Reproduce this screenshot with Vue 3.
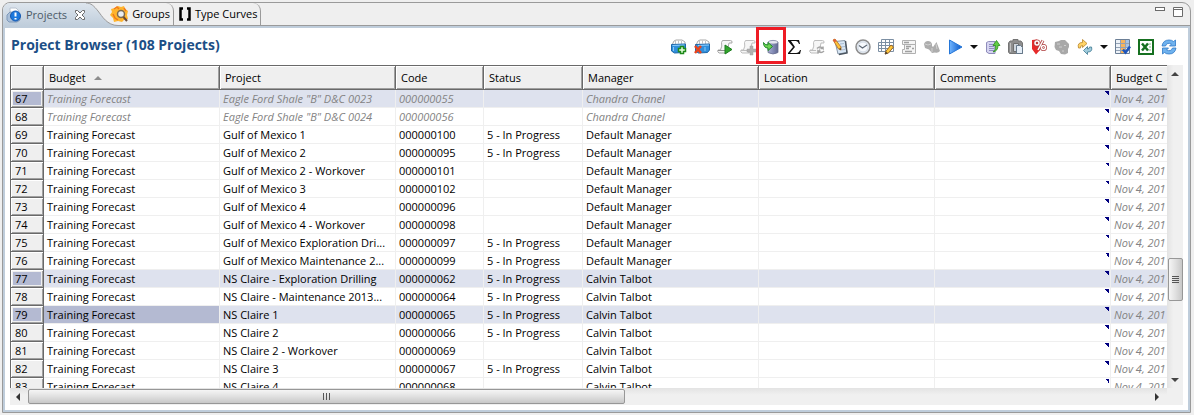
<script setup>
const columns = [
  { key: 'budget', label: 'Budget', width: 'w-wide' },
  { key: 'project', label: 'Project', width: 'w-wide' },
  { key: 'code', label: 'Code', width: 'w-code' },
  { key: 'status', label: 'Status', width: 'w-status' },
  { key: 'manager', label: 'Manager', width: 'w-wide' },
  { key: 'location', label: 'Location', width: 'w-wide' },
  { key: 'comments', label: 'Comments', width: 'w-wide' },
  { key: 'created', label: 'Budget C', width: 'w-wide' }
]

const progress = '5 - In Progress'
const source = [
  [67, 'Eagle Ford Shale "B" D&C 0023', '000000055', '', 'Chandra Chanel'],
  [68, 'Eagle Ford Shale "B" D&C 0024', '000000056', '', 'Chandra Chanel'],
  [69, 'Gulf of Mexico 1', '000000100', progress, 'Default Manager'],
  [70, 'Gulf of Mexico 2', '000000095', progress, 'Default Manager'],
  [71, 'Gulf of Mexico 2 - Workover', '000000101', '', 'Default Manager'],
  [72, 'Gulf of Mexico 3', '000000102', '', 'Default Manager'],
  [73, 'Gulf of Mexico 4', '000000096', '', 'Default Manager'],
  [74, 'Gulf of Mexico 4 - Workover', '000000098', '', 'Default Manager'],
  [75, 'Gulf of Mexico Exploration Dri...', '000000097', progress, 'Default Manager'],
  [76, 'Gulf of Mexico Maintenance 2...', '000000099', progress, 'Default Manager'],
  [77, 'NS Claire - Exploration Drilling', '000000062', progress, 'Calvin Talbot'],
  [78, 'NS Claire - Maintenance 2013...', '000000064', progress, 'Calvin Talbot'],
  [79, 'NS Claire 1', '000000065', progress, 'Calvin Talbot'],
  [80, 'NS Claire 2', '000000066', progress, 'Calvin Talbot'],
  [81, 'NS Claire 2 - Workover', '000000069', '', 'Calvin Talbot'],
  [82, 'NS Claire 3', '000000067', progress, 'Calvin Talbot'],
  [83, 'NS Claire 4', '000000068', '', 'Calvin Talbot']
]
const selected = [67, 77, 79]
const rows = source.map(([n, project, code, status, manager]) => ({
  n, project, code, status, manager,
  budget: 'Training Forecast', location: '', comments: '', created: 'Nov 4, 201',
  readonly: n < 69, selected: selected.includes(n)
}))
</script>

<template>
  <main class="page">
    <section class="panel">
      <header class="tabs">
        <nav class="tablist">
          <div class="tab active">
            <svg class="ticon" viewBox="0 0 16 16">
              <path d="M4 6V1h6l3 3v3z" fill="#fff" stroke="#b9c3d0" />
              <path d="M1 8l3-3 8 1 2 3v4l-3 2H3l-2-2z" fill="#a9bfd9" stroke="#7f99ba" />
              <circle cx="9.500" cy="9" r="5" fill="#1c78dd" stroke="#1458b0" />
              <path d="M9.500 5.500v4M9.500 11v1.500" stroke="#fff" stroke-width="2" />
            </svg>
            <a href="#projects" class="tlabel">Projects</a>
            <button class="close" aria-label="Close tab">
              <svg viewBox="0 0 12 12"><path d="M1.500 1.500h2L6 4l2.500-2.500h2v2L8 6l2.500 2.500v2h-2L6 8l-2.500 2.500h-2v-2L4 6 1.500 3.500z" fill="#fff" stroke="#6b6b6b" /></svg>
            </button>
          </div>
          <svg class="curve" viewBox="0 0 32 23" preserveAspectRatio="none">
            <defs><linearGradient id="tabfill" x1="0" y1="0" x2="0" y2="1"><stop offset="0" stop-color="#dde5ed" /><stop offset="1" stop-color="#bfcddb" /></linearGradient></defs>
            <path d="M0 0C5 0 8 3 12 8S21 22.500 32 22.500V23H0z" fill="url(#tabfill)" />
            <path d="M0 0C5 0 8 3 12 8S21 22.500 32 22.500" fill="none" stroke="#9a9a9a" />
          </svg>
          <div class="tab groups">
            <svg class="ticon" viewBox="0 0 16 16">
              <path d="M6 0l3 1 3-1 1 3 3 2-1 4 1 4-4 1-2 2-4-1-4 1-1-4-3-3 2-3-1-3 4-1z" fill="#ffb52e" />
              <path d="M2 3l3-2 2 2M1 8l2 4 3 2M12 2l2 3" stroke="#f07a1c" stroke-width="1.500" fill="none" />
              <circle cx="9" cy="8" r="3.500" fill="#e9eef2" stroke="#7b6a50" stroke-width="1.500" />
              <path d="M11.500 11l3.500 4" stroke="#6b4a35" stroke-width="2" />
            </svg>
            <a href="#groups" class="tlabel">Groups</a>
          </div>
          <div class="tab curves">
            <svg class="ticon" viewBox="0 0 16 16"><path d="M6 2.500H3.500v11H6M10 2.500h2.500v11H10" fill="none" stroke="#000" stroke-width="2.500" /></svg>
            <a href="#curves" class="tlabel">Type Curves</a>
          </div>
        </nav>
        <div class="winctl">
          <button aria-label="Minimize"><svg viewBox="0 0 10 10"><rect x=".5" y=".5" width="9" height="3" fill="#fff" stroke="#6b6b6b" /></svg></button>
          <button aria-label="Maximize"><svg viewBox="0 0 10 10"><path d="M.5.5h9v9h-9zM.5 2.500h9" fill="#fff" stroke="#6b6b6b" /></svg></button>
        </div>
      </header>

      <div class="body">
        <div class="bar">
          <h1>Project Browser (108 Projects)</h1>
          <div class="tools" role="toolbar" aria-label="Project actions">
            <button aria-label="Add project"><svg viewBox="0 0 16 16">
              <path d="M1 6l2-4 2-1h6l3 2v3z" fill="#fff" stroke="#a9a9a9" /><path d="M4.500 2v3M7.500 1.500v3M10.500 2v3" stroke="#c4c4c4" />
              <path d="M.5 5.500L14.500 5v6l-2 2.500-9 .5-3-2z" fill="#2f8fdc" stroke="#1d66a8" /><path d="M1.500 6.500l12-.5" stroke="#8fd0ff" /><path d="M2.500 8v4" stroke="#8cc8f5" />
              <path d="M9.500 7.500h3v2h2v3h-2v2h-3v-2h-2v-3h2z" fill="#e9ffe0" stroke="#1e8a1a" stroke-width="1.500" /></svg></button>
            <button aria-label="Delete project"><svg viewBox="0 0 16 16">
              <path d="M2 6l2-4 2-1h6l3 2v3z" fill="#fff" stroke="#a9a9a9" /><path d="M5.500 2v3M8.500 1.500v3M11.500 2v3" stroke="#c4c4c4" />
              <path d="M1.500 5.500L15.500 5v6l-2 2.500-9 .5-3-2z" fill="#2f8fdc" stroke="#1d66a8" /><path d="M4 6.500l11-.5" stroke="#8fd0ff" /><path d="M11 8v4" stroke="#8cc8f5" />
              <path d="M1 7l6 7M7 7l-6 7" stroke="#e8431b" stroke-width="2.500" /></svg></button>
            <button aria-label="Run script"><svg viewBox="0 0 16 16">
              <path d="M5.500 1.500h8q2 0 1.500 2.500h-3l-1.500 7-1 3H2q-2-1-1-3h2.500q2-4 1-7.500z" fill="#f6f6f6" stroke="#a8a8a8" /><path d="M1 11.500h7.500v2.500" fill="none" stroke="#8f8f8f" />
              <path d="M8 6l7 4.500L8 15z" fill="#31a52b" stroke="#1c7d1e" /></svg></button>
            <button aria-label="Add script"><svg viewBox="0 0 16 16">
              <path d="M5.500 1.500h8q2 0 1.500 2.500h-3l-1.500 7-1 3H2q-2-1-1-3h2.500q2-4 1-7.500z" fill="#f6f6f6" stroke="#bdbdbd" /><path d="M1 11.500h7.500v2.500" fill="none" stroke="#bdbdbd" />
              <path d="M10 7h3v3h3v3h-3v3h-3v-3H7v-3h3z" fill="#b0b0b0" stroke="#a0a0a0" stroke-width=".5" /></svg></button>
            <button class="marked" aria-label="Import to database"><svg viewBox="0 0 16 16">
              <defs><linearGradient id="cyl"><stop stop-color="#a9b0cf" /><stop offset=".4" stop-color="#8b93bd" /><stop offset="1" stop-color="#5f678f" /></linearGradient></defs>
              <path d="M5 3q5-3 10 0v10.500q-5 3-10 0z" fill="url(#cyl)" stroke="#6a7090" stroke-width=".8" /><ellipse cx="10" cy="3.200" rx="4.800" ry="1.800" fill="#e5e7f0" stroke="#8c91ad" stroke-width=".8" />
              <path d="M.5 3.500q1 2.500 4.500 2.500V3.500l4.500 4-4.500 4V9Q.5 9 .5 3.500z" fill="#6fd453" stroke="#1f8a2a" /></svg><span class="mark"></span></button>
            <button aria-label="Totals"><svg viewBox="0 0 16 16"><path d="M2 1h11l1 4h-1q-1-3-3-3H5l4 6-5 6h6q3 0 4-3h1l-1 4H2v-1l5-6-5-6z" fill="#111" /></svg></button>
            <button aria-label="Refresh script"><svg viewBox="0 0 16 16">
              <path d="M5.500 1.500h8q2 0 1.500 2.500h-3l-1.500 7-1 3H2q-2-1-1-3h2.500q2-4 1-7.500z" fill="#f6f6f6" stroke="#bdbdbd" /><path d="M1 11.500h6" stroke="#bdbdbd" />
              <path d="M8 9.500q3-3 6 0V7.500m0 2h-2.500M15 12q-3 3-6 0v2.500m0-2.500h2.500" fill="none" stroke="#a3a3a3" stroke-width="1.500" /></svg></button>
            <button aria-label="Edit notes"><svg viewBox="0 0 16 16">
              <path d="M3 2.500L13 1.500l2 12L6 15z" fill="#d8e6f4" stroke="#8797a8" /><path d="M13.500 2l1.500 12-8 1.500" fill="none" stroke="#4a545f" stroke-width="1.500" /><path d="M8 5l4-.5M9 8l4-.5M9 11l4-.5" stroke="#a8bdd3" />
              <path d="M1 1l2-1 6 8v3L6.500 10z" fill="#ffc43a" stroke="#b06a20" stroke-width=".8" /><path d="M1 1l2-1 1.500 2-2 1.500z" fill="#e35d38" /><path d="M9 11l-2-1 1.500-1.200z" fill="#333" /></svg></button>
            <button aria-label="Schedule"><svg viewBox="0 0 16 16"><circle cx="8" cy="8" r="7" fill="#e3e9f0" stroke="#8c8c8c" stroke-width="1.500" /><circle cx="8" cy="8" r="5" fill="#f6f9fd" stroke="#d3dbe5" /><path d="M12 6L7.500 9 4 6.500" fill="none" stroke="#606a77" stroke-width="1.200" /></svg></button>
            <button aria-label="Edit grid"><svg viewBox="0 0 16 16"><path d="M3.500.5h12v12h-15v-9h15M.5 6.500h15M.5 9.500h15M3.500.5v12M7.500.5v12M11.500.5v12" fill="#fff" stroke="#7c8fa3" /><path d="M7 15l1-3 5-6 2.500 2-5 6z" fill="#ffc83d" stroke="#9a6425" /><path d="M7 15.500l.8-3 2 1.800z" fill="#443d35" /></svg></button>
            <button aria-label="Form"><svg viewBox="0 0 16 16"><path d="M1.500 1.500h13v4h-13zM3.500 5.500h11v9h-13v-4h2z" fill="#f5f5f5" stroke="#b0b0b0" /><path d="M3 3.500h5M5 7.500h5M5 9.500h3M4 12.500h7M11 9.500h2" stroke="#a0a0a0" stroke-width="1.300" /></svg></button>
            <button aria-label="Shapes"><svg viewBox="0 0 16 16"><path d="M0 5q1-3 4-3t4 3v2l1 1 3.500-5L16 12q-2 2.500-5 1.500L8 14l-3-3.500L1 9z" fill="#adadad" /><path d="M1 5q3 2 6 0M8 9v4M12 5l1 5" stroke="#d0d0d0" fill="none" /></svg></button>
            <button aria-label="Run"><svg viewBox="0 0 16 16"><defs><linearGradient id="play"><stop stop-color="#70b5ff" /><stop offset="1" stop-color="#0755c8" /></linearGradient></defs><path d="M2.500 1L15 8 2.500 15z" fill="url(#play)" stroke="#2476d8" /></svg></button>
            <button class="drop" aria-label="Run options"><svg viewBox="0 0 8 8"><path d="M0 2h8L4 6z" fill="#111" /></svg></button>
            <button aria-label="Export list"><svg viewBox="0 0 16 16"><path d="M1.500 3.500l2-1h6.500v12H4l-2.500-1.500z" fill="#d5d4f0" stroke="#8f8cbb" /><path d="M4 5.500h5M4 7.500h5M4 9.500h5M4 11.500h5" stroke="#8f8cc0" /><path d="M8 13q3-1.500 2.500-6.500H8L11.500 1.500 15 6.500h-2q0 5.500-5 6.500z" fill="#62cc45" stroke="#2b8a1c" stroke-width=".8" /></svg></button>
            <button aria-label="Paste"><svg viewBox="0 0 16 16"><path d="M5 2V.5h5V2h3l1.500 2v10.500H1.500L.5 13V4L2 2z" fill="#8e8e8e" stroke="#747474" /><path d="M2.500 4v9" stroke="#c0c0c0" /><path d="M5.500 4.500h5v8h-5z" fill="#cfd6dd" stroke="#6f6f6f" /><path d="M8.500 6.500h4l2 2v6h-6z" fill="#e4edf6" stroke="#66788a" /></svg></button>
            <button aria-label="Percentage"><svg viewBox="0 0 16 16"><path d="M1 1l5-.5L8 8l1 3-4 4.500L1 10z" fill="#e62a2a" /><g fill="none" stroke="#b04040" stroke-width="3"><circle cx="6" cy="4" r="2" /><circle cx="12.500" cy="8.500" r="2" /><path d="M12 1.500L7 11" /></g><g fill="none" stroke="#fff" stroke-width="1.500"><circle cx="6" cy="4" r="2" /><circle cx="12.500" cy="8.500" r="2" /><path d="M12 1.500L7 11" /></g></svg></button>
            <button aria-label="Settings"><svg viewBox="0 0 16 16"><path d="M1 3l4-1 2-1h4l2 2 2 2v3l-1 2v4l-3 1.500-4-.5-2-3-3-1L.5 8z" fill="#a8a8a8" /><path d="M3 5h3M5 8h3M10 6.500h2M8 12h2" stroke="#cfcfcf" fill="none" /></svg></button>
            <button aria-label="Swap"><svg viewBox="0 0 16 16"><path d="M1.500 9Q0 3.500 5.500 3.500v-3L10 4.500l-4.500 4V6.500Q3 6.500 3.500 9z" fill="#ffd468" stroke="#b98426" stroke-width=".8" /><path d="M14.500 8q1.500 5-4 5v2.500L6.500 11.500l4-4v2.500q2 0 2-2z" fill="#9fcbdc" stroke="#3d7890" stroke-width=".8" /></svg></button>
            <button class="drop" aria-label="Swap options"><svg viewBox="0 0 8 8"><path d="M0 2h8L4 6z" fill="#111" /></svg></button>
            <button aria-label="Choose columns"><svg viewBox="0 0 16 16"><path d="M.5.500h14v14H.5z" fill="#edf2f8" stroke="#6c7f96" /><path d="M5 1h5v13H5z" fill="#f7b45c" /><path d="M11 1h3v7h-3z" fill="#a7c4e6" /><path d="M1 4.500h13M1 8.500h13M1 11.500h13M5.500 1v13M10.500 1v13" stroke="#93a2b5" /><path d="M8 10.500l2.500 3 4.500-6" fill="none" stroke="#1d55bb" stroke-width="2.500" /></svg></button>
            <button aria-label="Export to Excel"><svg viewBox="0 0 16 16"><path d="M1 1h14v14H1z" fill="#fff" stroke="#167020" stroke-width="2" /><path d="M4 4.500l6 7M10 4.500l-6 7" stroke="#167020" stroke-width="2.500" /><path d="M10.500 5h2.500M11 8h2M10.500 11h2.500" stroke="#7eb77e" /></svg></button>
            <button aria-label="Refresh"><svg viewBox="0 0 16 16"><path d="M1 7q1-6 7-6 3 0 4.500 1.500L14.500 1v6H8.500l2-2Q6 3 4.500 7z" fill="#6fb2ee" stroke="#2f78c6" stroke-width=".8" /><path d="M15 9q-1 6-7 6-3 0-4.500-1.500L1.500 15V9h6l-2 2q4.500 2 6-2z" fill="#6fb2ee" stroke="#2f78c6" stroke-width=".8" /></svg></button>
          </div>
        </div>

        <div class="grid">
          <div class="viewport">
            <table>
              <colgroup><col class="w-num"><col v-for="c in columns" :key="c.key" :class="c.width"></colgroup>
              <thead>
                <tr>
                  <th aria-label="Row"></th>
                  <th v-for="c in columns" :key="c.key" scope="col">{{ c.label }}<svg v-if="c.key === 'budget'" class="sort" viewBox="0 0 8 4"><path d="M0 4l4-4 4 4z" fill="#8c8c8c" /></svg></th>
                </tr>
              </thead>
              <tbody>
                <tr v-for="r in rows" :key="r.n" :class="{ selected: r.selected, readonly: r.readonly }">
                  <th scope="row"><span class="num">{{ r.n }}</span></th>
                  <td v-for="c in columns" :key="c.key" :class="[c.key, { focus: r.n === 79 && c.key === 'budget' }]">{{ r[c.key] }}</td>
                </tr>
              </tbody>
            </table>
          </div>
          <div class="vscroll">
            <svg class="arrow" viewBox="0 0 8 4"><path d="M0 4l4-4 4 4z" fill="#444" /></svg>
            <div class="vtrack"><div class="vthumb"><i></i><i></i><i></i><i></i></div></div>
            <svg class="arrow" viewBox="0 0 8 4"><path d="M0 0l4 4 4-4z" fill="#444" /></svg>
          </div>
          <div class="hscroll">
            <svg class="harrow" viewBox="0 0 4 8"><path d="M4 0L0 4l4 4z" fill="#333" /></svg>
            <div class="htrack"><div class="hthumb"><i></i><i></i><i></i></div></div>
            <svg class="harrow" viewBox="0 0 4 8"><path d="M0 0l4 4-4 4z" fill="#333" /></svg>
          </div>
          <div class="corner"></div>
        </div>
      </div>
    </section>
  </main>
</template>

<style>
body { background: #efefef; }
</style>

<style scoped>
* { box-sizing: border-box; }
.page { height: 100vh; min-height: 200px; padding: 2px 3px 2px 2px; font-family: "Open Sans", "Noto Sans", sans-serif; font-size: 11px; color: #000; background: #efefef; }
.panel { height: 100%; display: flex; flex-direction: column; border: 1px solid #9a9a9a; border-radius: 8px 9px 0 0; overflow: hidden; }
button { padding: 0; border: 0; background: none; display: flex; align-items: center; justify-content: center; }
svg { display: block; flex: none; overflow: visible; }
.tabs { display: flex; justify-content: space-between; height: 23px; flex: none; border-bottom: 1px solid #9a9a9a; }
.tablist { display: flex; height: 23px; }
.tab { display: flex; align-items: center; gap: 4px; height: 22px; }
.tab.active { height: 23px; background: linear-gradient(#dde5ed, #bfcddb); padding-left: 3px; }
.curve { width: 32px; height: 23px; }
.ticon { width: 16px; height: 16px; }
.tlabel { color: #000; text-decoration: none; font-size: 11px; line-height: 20px; white-space: nowrap; }
.active .tlabel { color: #4c5a68; }
.close { margin-left: 3px; }
.close svg { width: 12px; height: 12px; }
.groups, .curves { padding-right: 3px; border-right: 1px solid #9a9a9a; border-top-right-radius: 8px; }
.groups { margin-left: -6px; }
.curves { padding-left: 3px; gap: 2px; }
.winctl { display: flex; align-items: flex-start; gap: 8px; padding: 4px 7px 0 0; }
.winctl svg { width: 10px; height: 10px; }
.body { flex: 1; min-height: 0; display: flex; flex-direction: column; border: 2px solid #bfcddb; background: #fff; }
.bar { display: flex; align-items: center; justify-content: space-between; height: 37px; flex: none; padding: 0 8px 0 6px; }
h1 { margin: 0; padding-bottom: 3px; font-size: 14px; line-height: 20px; font-weight: 700; color: #1c4f86; white-space: nowrap; }
.tools { display: flex; }
.tools button { position: relative; width: 23px; height: 20px; }
.tools button.drop { width: 15px; }
.tools svg { width: 16px; height: 16px; }
.tools .drop svg { width: 8px; height: 8px; }
.mark { position: absolute; top: -10px; left: -3px; width: 30px; height: 37px; border: 3px solid #ee1c25; }
.grid { flex: 1; min-height: 0; margin: 0 5px; padding-bottom: 5px; display: grid; grid-template-columns: minmax(0, 1fr) 16px; grid-template-rows: minmax(0, 1fr) 17px; }
.viewport { overflow: hidden; border: 1px solid #696969; border-width: 1px 0 0 1px; }
table { width: 1276px; table-layout: fixed; border-collapse: separate; border-spacing: 0; }
.w-num { width: 33px; }
.w-wide { width: 176px; }
.w-code { width: 88px; }
.w-status { width: 99px; }
th, td { text-align: left; font-weight: 400; white-space: nowrap; overflow: hidden; }
thead th { height: 24px; padding: 0 5px; line-height: 20px; background: #efefef; border: 1px solid #696969; border-width: 0 1px 1px 0; box-shadow: inset 1px 1px #fff, inset -1px -1px #a0a0a0; }
.sort { display: inline-block; width: 8px; height: 4px; margin-left: 8px; vertical-align: 2px; }
tbody th { height: 18px; padding: 0 4px; line-height: 16px; background: #efefef; border: 1px solid #696969; border-width: 0 1px 1px 0; box-shadow: inset 1px 1px #fff, inset -1px -1px #a0a0a0; }
td { height: 18px; padding: 0 3px; line-height: 17px; border: 1px solid #efefef; border-width: 0 1px 1px 0; }
.num { display: block; line-height: 13px; }
.selected .num { background: #b4bad2; margin: 0 -2px; padding: 0 2px; }
.selected td { background-color: #dee2ee; }
.selected td.focus { background-color: #b4bad2; }
.readonly td, td.created { color: #838383; font-style: italic; }
td.comments { background-image: linear-gradient(to bottom left, #000080 50%, transparent 50%); background-repeat: no-repeat; background-size: 4px 4px; background-position: right 1px top 1px; }
.vscroll { display: flex; flex-direction: column; align-items: center; padding: 7px 0 6px; background: linear-gradient(90deg, #e3e3e3, #f0f0f0 40%); }
.arrow { width: 8px; height: 4px; }
.vtrack { flex: 1; width: 15px; display: flex; flex-direction: column; }
.vtrack::before { content: ""; flex: 180 1 0; }
.vtrack::after { content: ""; flex: 76 1 0; }
.vthumb { height: 43px; border: 1px solid #979797; border-radius: 2px; background: linear-gradient(90deg, #f5f5f5, #e0e0e0 50%, #c8c8c8); display: flex; flex-direction: column; align-items: center; justify-content: center; gap: 1px; }
.vthumb i { width: 7px; height: 1px; background: #555; }
.hscroll { display: flex; align-items: center; padding: 1px 8px 0 6px; background: linear-gradient(#e3e3e3, #f0f0f0 40%); }
.harrow { width: 4px; height: 8px; }
.htrack { flex: 1; height: 16px; padding-left: 8px; }
.hthumb { width: 53%; height: 15px; border: 1px solid #979797; border-radius: 2px; background: linear-gradient(#f5f5f5, #e0e0e0 50%, #c8c8c8); display: flex; align-items: center; justify-content: center; gap: 2px; }
.hthumb i { width: 1px; height: 7px; background: #555; }
.corner { background: #f0f0f0; }
</style>
